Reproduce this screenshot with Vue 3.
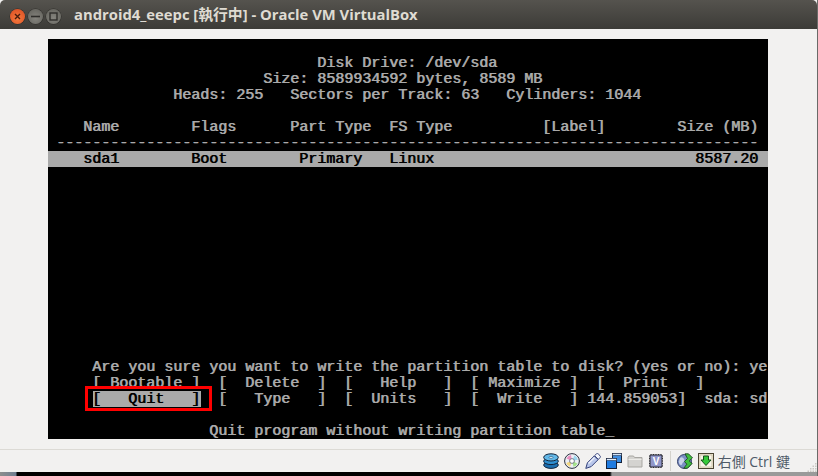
<script setup>
function line(...parts) {
  let s = ''
  for (const [col, text] of parts) s = s.padEnd(col, ' ') + text
  return s
}

const rows = Array.from({ length: 25 }, () => ({ text: '' }))
rows[1] = { text: line([30, 'Disk Drive: /dev/sda']) }
rows[2] = { text: line([24, 'Size: 8589934592 bytes, 8589 MB']) }
rows[3] = { text: line([14, 'Heads: 255   Sectors per Track: 63   Cylinders: 1044']) }
rows[5] = { text: line([4, 'Name'], [16, 'Flags'], [27, 'Part Type'], [38, 'FS Type'], [55, '[Label]'], [70, 'Size (MB)']) }
rows[6] = { text: line([1, '-'.repeat(78)]) }
rows[7] = { text: line([4, 'sda1'], [16, 'Boot'], [28, 'Primary'], [38, 'Linux'], [72, '8587.20']), selected: true }
rows[20] = { text: line([5, 'Are you sure you want to write the partition table to disk? (yes or no): ye']) }
rows[21] = { text: line([5, '[ Bootable ]'], [19, '[  Delete  ]'], [33, '[   Help   ]'], [47, '[ Maximize ]'], [61, '[  Print   ]']) }
rows[22] = {
  lead: '     ',
  active: '[   Quit   ]',
  text: line([2, '[   Type   ]'], [16, '[  Units   ]'], [30, '[  Write   ] 144.859053]  sda: sd'])
}
rows[24] = { text: line([18, 'Quit program without writing partition table_']) }
</script>

<template>
  <div class="window">
    <header class="titlebar">
      <div class="controls">
        <span class="ctl close">
          <svg width="7" height="7" viewBox="0 0 7 7"><path d="M1 1l5 5M6 1L1 6" stroke="#4a1c0c" stroke-width="1.4" /></svg>
        </span>
        <span class="ctl">
          <svg width="9" height="9" viewBox="0 0 9 9"><path d="M0 4.5h9" stroke="#2f2e2b" stroke-width="1.6" /></svg>
        </span>
        <span class="ctl">
          <svg width="9" height="9" viewBox="0 0 9 9"><rect x="1" y="1" width="7" height="7" fill="none" stroke="#2f2e2b" stroke-width="1.4" /></svg>
        </span>
      </div>
      <div class="title">android4_eeepc [執行中] - Oracle VM VirtualBox</div>
    </header>

    <main class="content">
      <div class="screen">
        <div v-for="(row, i) in rows" :key="i" class="row" :class="{ selected: row.selected }"><template v-if="row.active">{{ row.lead }}<span class="active">{{ row.active }}</span></template>{{ row.text }}</div>
        <div class="callout"></div>
      </div>
    </main>

    <footer class="statusbar">
      <svg class="icon" viewBox="0 0 16 16">
        <ellipse cx="8" cy="12" rx="7.3" ry="3.4" fill="#1c6fb0" stroke="#13243a" />
        <ellipse cx="8" cy="8.2" rx="7.3" ry="3.4" fill="#2f8fd0" stroke="#13243a" />
        <ellipse cx="8" cy="4.4" rx="7.3" ry="3.6" fill="#63b8e8" stroke="#13243a" />
        <ellipse cx="8" cy="4.4" rx="2" ry="1" fill="#dff2fb" stroke="#1c4f7a" stroke-width=".6" />
      </svg>
      <svg class="icon" viewBox="0 0 16 16">
        <circle cx="8" cy="8" r="7.4" fill="#eceef4" stroke="#2a3040" />
        <path d="M8 8L2.5 5.5A6 6 0 0 1 7 2z" fill="#e98fc0" />
        <path d="M8 8l5.8-1.2A6 6 0 0 0 10.5 2.5z" fill="#9bd7ef" />
        <path d="M8 8l5.5 2.5A6 6 0 0 1 9.5 13.8z" fill="#a4e28c" />
        <path d="M8 8l-5.7 2A6 6 0 0 0 6 13.7z" fill="#f3d77e" />
        <circle cx="8" cy="8" r="2.4" fill="#fff" stroke="#5a6275" stroke-width=".8" />
      </svg>
      <svg class="icon" viewBox="0 0 16 16">
        <path d="M.8 15.4l1.6-5.6L9.300 2.900l3.800 3.800L6.200 13.600z" fill="#b8c6ea" stroke="#33407a" stroke-linejoin="round" />
        <path d="M9.600 2.700l1.700-1.700c.7-.6 1.400-.6 2 0l1.700 1.700c.6.6.6 1.300 0 1.900l-1.700 1.800z" fill="#f4f6fc" stroke="#33407a" stroke-linejoin="round" />
        <path d="M3.500 10.500l6-6" stroke="#eef1fa" stroke-width="1.200" />
      </svg>
      <svg class="icon" viewBox="0 0 16 16">
        <rect x="6.500" y=".5" width="9" height="9" fill="#3d8ce0" stroke="#14213a" />
        <rect x="6.500" y=".5" width="9" height="2" fill="#cfe2f6" stroke="#14213a" stroke-width=".5" />
        <rect x=".5" y="5.500" width="10" height="10" fill="#1f7be0" stroke="#14213a" />
        <rect x=".5" y="5.500" width="10" height="2" fill="#e3eefa" stroke="#14213a" stroke-width=".5" />
      </svg>
      <svg class="icon" viewBox="0 0 16 16">
        <path d="M1 14V4.500l1-1.500h4.500l1 1.500H15V14z" fill="#d4d3d0" stroke="#a8a7a3" />
        <path d="M1.500 6.500h13" stroke="#ecebe8" />
      </svg>
      <svg class="icon" viewBox="0 0 16 16">
        <path d="M3 1v14M5.500 1v14M8 1v14M10.500 1v14M13 1v14M1 3h14M1 5.500h14M1 8h14M1 10.500h14M1 13h14" stroke="#2a2a33" stroke-width="1.100" />
        <rect x="2" y="2" width="12" height="12" rx="1" fill="#8f96c9" stroke="#2a2a33" />
        <text x="8" y="12" class="chip">V</text>
      </svg>
      <span class="divider"></span>
      <svg class="icon" viewBox="0 0 16 16">
        <circle cx="7.500" cy="8.500" r="7" fill="#7b8fc4" stroke="#35406a" />
        <path d="M3 5c2-1.500 3 0 4 1s0 3-1 3.500-.5 2.500-2 2.500-2.500-3-2-4 .5-2 1-3z" fill="#c9d2e8" />
        <path d="M8 .8h3.500l4 4-3.300 3.200 3 2.400-4.700 4.800H6.800l3-4-2.300-2.700 3-3z" fill="#3fbf3f" stroke="#17391b" stroke-width=".8" stroke-linejoin="round" />
      </svg>
      <svg class="icon" viewBox="0 0 16 16">
        <rect x=".5" y=".5" width="15" height="15" fill="#efe9d6" stroke="#4b4534" />
        <rect x="2" y="2" width="12" height="12" fill="#f8f5ea" stroke="#b8ae8e" stroke-width=".6" />
        <path d="M5.500 3h5v4h2.500L8 12.500 3 7h2.500z" fill="#35c93a" stroke="#15531a" stroke-linejoin="round" />
      </svg>
      <span class="hostkey">右側 Ctrl 鍵</span>
      <svg class="grip" viewBox="0 0 10 10" width="10" height="10">
        <g fill="#c9c7c2">
          <rect x="8" y="1" width="1.500" height="1.500" />
          <rect x="5.500" y="3.500" width="1.500" height="1.500" /><rect x="8" y="3.500" width="1.500" height="1.500" />
          <rect x="3" y="6" width="1.500" height="1.500" /><rect x="5.500" y="6" width="1.500" height="1.500" /><rect x="8" y="6" width="1.500" height="1.500" />
          <rect x=".5" y="8.500" width="1.500" height="1.500" /><rect x="3" y="8.500" width="1.500" height="1.500" /><rect x="5.500" y="8.500" width="1.500" height="1.500" /><rect x="8" y="8.500" width="1.500" height="1.500" />
        </g>
      </svg>
    </footer>
    <div class="desktop"></div>
  </div>
</template>

<style scoped>
.window {
  width: 818px;
  height: 476px;
  display: flex;
  flex-direction: column;
  overflow: hidden;
  background: #f2f1f0;
  border-right: 1px solid #6a6a68;
  box-sizing: border-box;
}

.titlebar {
  height: 29px;
  flex: none;
  display: flex;
  align-items: center;
  background: linear-gradient(#55534e, #3c3b37);
  border-radius: 5px 5px 0 0;
}

.controls {
  display: flex;
  gap: 3px;
  margin: 3px 0 0 10px;
}

.ctl {
  width: 15px;
  height: 15px;
  border-radius: 50%;
  display: flex;
  align-items: center;
  justify-content: center;
  background: radial-gradient(circle at 50% 60%, #85847e, #5f5e58);
  box-shadow: 0 0 0 .5px #2f2e2b;
}

.ctl.close {
  background: radial-gradient(circle at 50% 65%, #f47a3e, #d9491f);
}

.title {
  margin: 0 0 2px 13px;
  font: bold 14.8px "Open Sans", "Noto Sans CJK TC", sans-serif;
  color: #dfdbd2;
  white-space: nowrap;
}

.content {
  flex: 1;
  padding: 10px 0 0 48px;
  min-height: 0;
}

.screen {
  position: relative;
  width: 720px;
  height: 400px;
  background: #000;
  color: #aaa;
  font: 15px/18px "Liberation Mono", monospace;
  text-shadow: .7px 0 0 currentColor;
  overflow: hidden;
}

.row {
  height: 16px;
  white-space: pre;
  text-indent: -1px;
}

.selected {
  background: #aaa;
  color: #000;
}

.active {
  position: relative;
  z-index: 2;
  background: #aaa;
  color: #000;
  display: inline-block;
  vertical-align: top;
  height: 16px;
  width: 108px;
  margin: 0 -1px 0 1px;
}

.callout {
  position: absolute;
  left: 37px;
  top: 347px;
  width: 127px;
  height: 25px;
  box-sizing: border-box;
  border: 3px solid #f00;
  background: #000;
  z-index: 1;
}

.statusbar {
  flex: none;
  height: 23px;
  box-sizing: border-box;
  border-top: 1px solid #dcdad5;
  display: flex;
  align-items: center;
  justify-content: flex-end;
  gap: 5px;
  position: relative;
  padding-right: 27px;
}

.icon {
  width: 16px;
  height: 16px;
  flex: none;
}

.chip {
  font: bold 10px "Liberation Sans", sans-serif;
  fill: #fff;
  text-anchor: middle;
}

.divider {
  width: 1px;
  height: 20px;
  background: #d4d2cc;
  margin: 0 1px;
}

.hostkey {
  margin-left: -1px;
  font: 14px "Open Sans", "Noto Sans CJK TC", sans-serif;
  color: #4f5a68;
  white-space: nowrap;
}

.grip {
  position: absolute;
  right: 0;
  bottom: 0;
}

.desktop {
  flex: none;
  height: 4px;
  background: linear-gradient(90deg, #8d8d8d 0, #6f7f92 16px, #000 17px, #000 610px, #9a9a9a 612px, #9a9a9a 100%);
}
</style>

<style>
body {
  background: #e8e8e8;
}
</style>
